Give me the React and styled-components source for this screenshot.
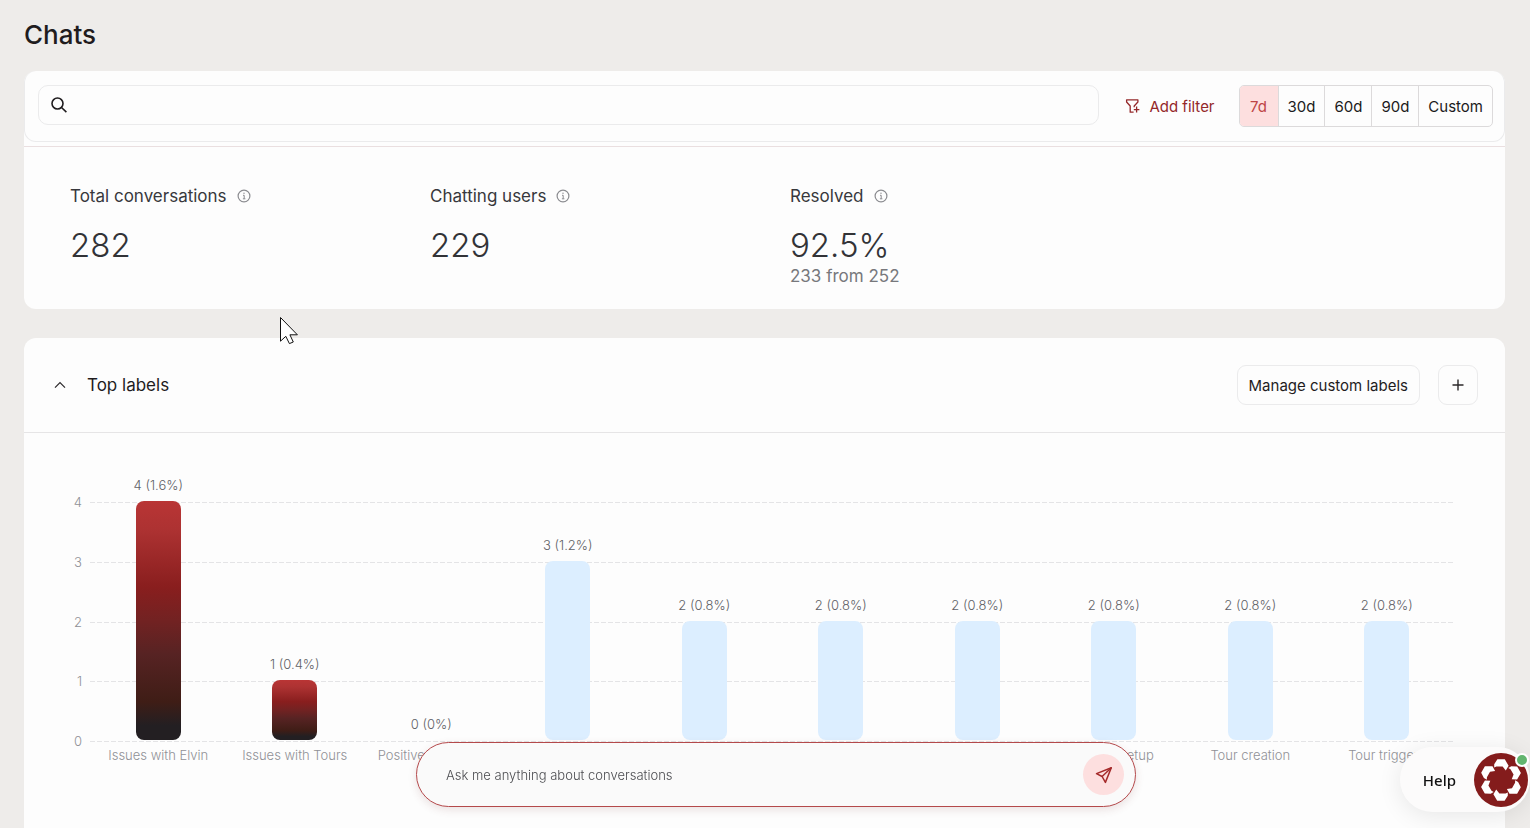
import { useState } from "react";
import styled, { createGlobalStyle, css } from "styled-components";

const PERIODS = ["7d", "30d", "60d", "90d", "Custom"];

const STATS = [
  { label: "Total conversations", value: "282" },
  { label: "Chatting users", value: "229" },
  { label: "Resolved", value: "92.5%", detail: "233 from 252" },
];

const MAX = 4;
const TICKS = [4, 3, 2, 1, 0];

const LABELS = [
  { name: "Issues with Elvin", count: 4, share: "1.6%", custom: true },
  { name: "Issues with Tours", count: 1, share: "0.4%", custom: true },
  { name: "Positive feedback", count: 0, share: "0%", custom: true },
  { name: "", count: 3, share: "1.2%" },
  { name: "", count: 2, share: "0.8%" },
  { name: "", count: 2, share: "0.8%" },
  { name: "", count: 2, share: "0.8%" },
  { name: "Widget setup", count: 2, share: "0.8%" },
  { name: "Tour creation", count: 2, share: "0.8%" },
  { name: "Tour triggers", count: 2, share: "0.8%" },
];

const SearchIcon = () => (
  <svg width="16" height="18" viewBox="0 0 16 18" fill="none" stroke="#1f1c1e" strokeWidth="1.6" aria-hidden="true">
    <circle cx="6.5" cy="7.5" r="5.5" />
    <path d="M10.5 11.5 15.4 16.2" />
  </svg>
);

const FilterIcon = () => (
  <svg width="16" height="16" viewBox="0 0 16 16" fill="none" stroke="currentColor" strokeWidth="1.3" strokeLinejoin="round" aria-hidden="true">
    <path d="M8.6 14.2H5.2V8L1.6 4V1.8h11.3V4L9.2 8v1.2" />
    <path d="M11.6 8.6v6M8.8 11.6h5.6" />
  </svg>
);

const InfoIcon = () => (
  <svg width="14" height="14" viewBox="0 0 14 14" fill="none" stroke="#8b8c90" aria-hidden="true">
    <circle cx="7" cy="7" r="5.9" strokeWidth="1.2" />
    <path d="M6 6.3h1.2v3.4M5.9 9.8h2.5" strokeWidth="1" />
    <circle cx="7" cy="4.2" r="0.7" fill="#8b8c90" stroke="none" />
  </svg>
);

const ChevronUp = () => (
  <svg width="12" height="8" viewBox="0 0 12 8" fill="none" stroke="#2b282a" strokeWidth="1.2" aria-hidden="true">
    <path d="M1 6.7 6 1.5l5 5.2" />
  </svg>
);

const PlusIcon = () => (
  <svg width="12" height="12" viewBox="0 0 12 12" stroke="#2b282a" strokeWidth="1.4" aria-hidden="true">
    <path d="M6 .5v11M.5 6h11" />
  </svg>
);

const SendIcon = () => (
  <svg width="18" height="18" viewBox="0 0 18 18" fill="none" stroke="#a52a2a" strokeWidth="1.5" strokeLinejoin="round" aria-hidden="true">
    <path d="M16.3 1.7 1.5 7.6l5.6 2.9 3.3 5.9z" />
    <path d="M16.3 1.7 7.1 10.5" />
  </svg>
);

const BLADE = "M-6.8 -12.4 V-15.8 L-3.6 -20.8 H3.8 L7.6 -14.2 L4.8 -9.6 L1.6 -13.6 H-4.6z";

const LogoIcon = () => (
  <svg width="54" height="54" viewBox="-27 -27 54 54" aria-hidden="true">
    <circle r="27" fill="#841c1c" />
    {[0, 60, 120, 180, 240, 300].map((angle) => (
      <path key={angle} d={BLADE} fill="#fff" transform={`rotate(${angle})`} />
    ))}
  </svg>
);

const Pointer = () => (
  <PointerSvg width="19" height="28" viewBox="0 0 19 28" aria-hidden="true">
    <path d="M.5.5v23.7l5.3-4.9 3.6 7.3 3.9-1.6-3.4-7.2h7.5z" fill="#fff" stroke="#111" />
  </PointerSvg>
);

const Stat = ({ label, value, detail }) => (
  <StatItem>
    <StatLabel>
      {label}
      <InfoIcon />
    </StatLabel>
    <StatValue>{value}</StatValue>
    {detail && <StatDetail>{detail}</StatDetail>}
  </StatItem>
);

const LabelsChart = () => (
  <Chart>
    <Axis>
      {TICKS.map((tick) => (
        <Tick key={tick}>{tick}</Tick>
      ))}
    </Axis>
    <Plot>
      <Lines>
        {TICKS.map((tick) => (
          <GridLine key={tick} />
        ))}
      </Lines>
      <Bars>
        {LABELS.map((item, i) => (
          <Column key={i}>
            <Count>{`${item.count} (${item.share})`}</Count>
            <Bar $custom={item.custom} style={{ height: `${(item.count / MAX) * 239}px` }} />
          </Column>
        ))}
      </Bars>
      <Names>
        {LABELS.map((item, i) => (
          <Name key={i}>{item.name}</Name>
        ))}
      </Names>
    </Plot>
  </Chart>
);

export default function App() {
  const [period, setPeriod] = useState("7d");

  return (
    <>
      <GlobalStyle />
      <Page>
        <Title>Chats</Title>
        <Card>
          <Toolbar>
            <SearchBox>
              <SearchIcon />
              <SearchInput type="search" aria-label="Search chats" />
            </SearchBox>
            <FilterButton type="button">
              <FilterIcon />
              Add filter
            </FilterButton>
            <Periods>
              {PERIODS.map((item) => (
                <PeriodButton key={item} type="button" $active={item === period} onClick={() => setPeriod(item)}>
                  {item}
                </PeriodButton>
              ))}
            </Periods>
          </Toolbar>
          <Stats>
            {STATS.map((stat) => (
              <Stat key={stat.label} {...stat} />
            ))}
          </Stats>
        </Card>
        <Card $fill>
          <CardHeader>
            <ToggleButton type="button" aria-label="Collapse top labels">
              <ChevronUp />
            </ToggleButton>
            <CardTitle>Top labels</CardTitle>
            <OutlineButton type="button">Manage custom labels</OutlineButton>
            <OutlineButton type="button" $square aria-label="Add label">
              <PlusIcon />
            </OutlineButton>
          </CardHeader>
          <LabelsChart />
        </Card>
      </Page>
      <PromptLayer>
        <Prompt>
          <PromptInput type="text" aria-label="Ask about conversations" placeholder="Ask me anything about conversations" />
          <SendButton type="button" aria-label="Send">
            <SendIcon />
          </SendButton>
        </Prompt>
      </PromptLayer>
      <HelpButton type="button">
        Help
        <Avatar>
          <LogoIcon />
          <StatusDot />
        </Avatar>
      </HelpButton>
      <Pointer />
    </>
  );
}

const GlobalStyle = createGlobalStyle`
  *, *::before, *::after {
    box-sizing: border-box;
  }

  body {
    margin: 0;
    background-color: #eeecea;
    color: #1f1c1e;
    font-family: Inter, "Liberation Sans", sans-serif;
  }

  button, input {
    margin: 0;
    padding: 0;
    border: none;
    background: none;
    color: inherit;
    font: inherit;
  }

  button {
    cursor: pointer;
  }
`;

const Page = styled.main`
  display: flex;
  flex-direction: column;
  height: 100vh;
  padding: 16px 25px 0 24px;
  overflow: hidden;
`;

const Title = styled.h1`
  margin: 0 0 17px;
  font-size: 26px;
  font-weight: 500;
  line-height: 38px;
`;

const Card = styled.section`
  flex-shrink: 0;
  background-color: #fdfdfd;
  border-radius: 12px;

  ${(props) =>
    props.$fill &&
    css`
      flex: 1 0 auto;
      margin-top: 29px;
      border-radius: 12px 12px 0 0;
    `}
`;

const Toolbar = styled.div`
  display: flex;
  align-items: center;
  height: 71px;
  padding: 0 11px 0 13px;
  border: 1px solid #ebebec;
  border-top: none;
  border-radius: 12px;
`;

const SearchBox = styled.div`
  flex: 1;
  display: flex;
  align-items: center;
  gap: 8px;
  height: 40px;
  margin-bottom: 2px;
  padding: 0 12px;
  border: 1px solid #ebebec;
  border-radius: 10px;
`;

const SearchInput = styled.input`
  flex: 1;
  outline: none;
  font-size: 16px;
`;

const FilterButton = styled.button`
  display: flex;
  align-items: center;
  gap: 8px;
  margin: 0 24px 0 26px;
  color: #94282a;
  font-size: 15px;
`;

const Periods = styled.div`
  display: flex;
  height: 42px;
  border: 1px solid #dcdadb;
  border-radius: 5px;
  overflow: hidden;
`;

const PeriodButton = styled.button`
  min-width: 38px;
  padding: 0 9px;
  color: #1b1a20;
  font-size: 15px;

  & + & {
    border-left: 1px solid #dcdadb;
  }

  ${(props) =>
    props.$active &&
    css`
      background-color: #fddfdf;
      color: #bd4546;
    `}
`;

const Stats = styled.div`
  display: flex;
  min-height: 163px;
  margin-top: 4px;
  padding: 36px 46px 20px;
  border-top: 1px solid #eadfe0;
`;

const StatItem = styled.div`
  width: 360px;
`;

const StatLabel = styled.div`
  display: flex;
  align-items: center;
  gap: 10px;
  color: #37383c;
  font-size: 17px;
  line-height: 26px;
`;

const StatValue = styled.div`
  margin-top: 14px;
  color: #323337;
  font-size: 33px;
  font-weight: 300;
  line-height: 44px;
`;

const StatDetail = styled.div`
  color: #77787c;
  font-size: 17px;
  line-height: 18px;
`;

const CardHeader = styled.div`
  display: flex;
  align-items: center;
  height: 95px;
  padding: 0 27px;
  border-bottom: 1px solid #e6e5e6;
`;

const ToggleButton = styled.button`
  display: flex;
  padding: 3px;
`;

const CardTitle = styled.h2`
  flex: 1;
  margin: 0 0 0 18px;
  font-size: 17px;
  font-weight: 400;
`;

const OutlineButton = styled.button`
  display: flex;
  align-items: center;
  justify-content: center;
  height: 40px;
  padding: 0 11px;
  border: 1px solid #ebebec;
  border-radius: 9px;
  font-size: 15px;

  ${(props) =>
    props.$square &&
    css`
      width: 40px;
      margin-left: 18px;
      padding: 0;
    `}
`;

const Chart = styled.div`
  display: flex;
  gap: 8px;
  padding: 59px 50px 40px 46px;
`;

const Axis = styled.div`
  display: flex;
  flex-direction: column;
  justify-content: space-between;
  width: 12px;
  height: 259px;
`;

const Tick = styled.span`
  color: #909196;
  font-size: 13px;
  font-weight: 300;
  line-height: 20px;
  text-align: right;
`;

const Plot = styled.div`
  flex: 1;
  display: grid;
  grid-template-rows: 254px auto;
`;

const Lines = styled.div`
  grid-area: 1 / 1;
  display: flex;
  flex-direction: column;
  justify-content: space-between;
  padding: 10px 0 4px;
`;

const GridLine = styled.div`
  height: 1px;
  background: repeating-linear-gradient(to right, #e4e4e6 0 5px, transparent 5px 7px);
`;

const Bars = styled.div`
  grid-area: 1 / 1;
  display: grid;
  grid-template-columns: repeat(10, 1fr);
`;

const Column = styled.div`
  display: flex;
  flex-direction: column;
  align-items: center;
  justify-content: flex-end;
  height: 248px;
`;

const Count = styled.span`
  margin-bottom: 7px;
  color: #606166;
  font-size: 13px;
  font-weight: 300;
  line-height: 18px;
  white-space: nowrap;
`;

const Bar = styled.div`
  flex-shrink: 0;
  width: 45px;
  border-radius: 8px;
  background: ${(props) =>
    props.$custom
      ? "linear-gradient(#b93535 0%, #ad3232 12%, #891e1e 36%, #722222 50%, #572323 64%, #3f1d16 84%, #231f22 94%, #231f22 100%)"
      : "#dceeff"};
`;

const Names = styled.div`
  display: grid;
  grid-template-columns: repeat(10, 1fr);
`;

const Name = styled.span`
  color: #909196;
  font-size: 13px;
  font-weight: 300;
  line-height: 18px;
  text-align: center;
  white-space: nowrap;
`;

const PromptLayer = styled.div`
  position: fixed;
  left: 22px;
  right: 0;
  bottom: 21px;
  display: flex;
  justify-content: center;
  pointer-events: none;
`;

const Prompt = styled.form`
  display: flex;
  align-items: center;
  width: 720px;
  max-width: 90%;
  height: 65px;
  padding: 0 11px 0 29px;
  border: 1px solid #b4494b;
  border-radius: 33px;
  background-color: #fafafa;
  box-shadow: 0 3px 8px rgba(120, 60, 60, 0.14);
  pointer-events: auto;
`;

const PromptInput = styled.input`
  flex: 1;
  outline: none;
  font-size: 13px;
  font-weight: 300;

  &::placeholder {
    color: #4c4d51;
    opacity: 1;
  }
`;

const SendButton = styled.button`
  display: flex;
  align-items: center;
  justify-content: center;
  width: 41px;
  height: 41px;
  border-radius: 50%;
  background-color: #fddfdf;
`;

const HelpButton = styled.button`
  position: fixed;
  right: 0;
  bottom: 16px;
  display: flex;
  align-items: center;
  gap: 18px;
  height: 65px;
  padding: 0 2px 0 23px;
  border-radius: 33px;
  background-color: #fcfbfb;
  box-shadow: 0 4px 24px rgba(0, 0, 0, 0.09);
  color: #111;
  font-family: "Noto Sans", "Open Sans", sans-serif;
  font-size: 15px;
  font-weight: 500;
`;

const Avatar = styled.span`
  position: relative;
  display: flex;
`;

const StatusDot = styled.span`
  position: absolute;
  top: 0;
  right: -1px;
  width: 14px;
  height: 14px;
  border: 2px solid #fff;
  border-radius: 50%;
  background-color: #62b56e;
`;

const PointerSvg = styled.svg`
  position: fixed;
  left: 280px;
  top: 317px;
  pointer-events: none;
`;
